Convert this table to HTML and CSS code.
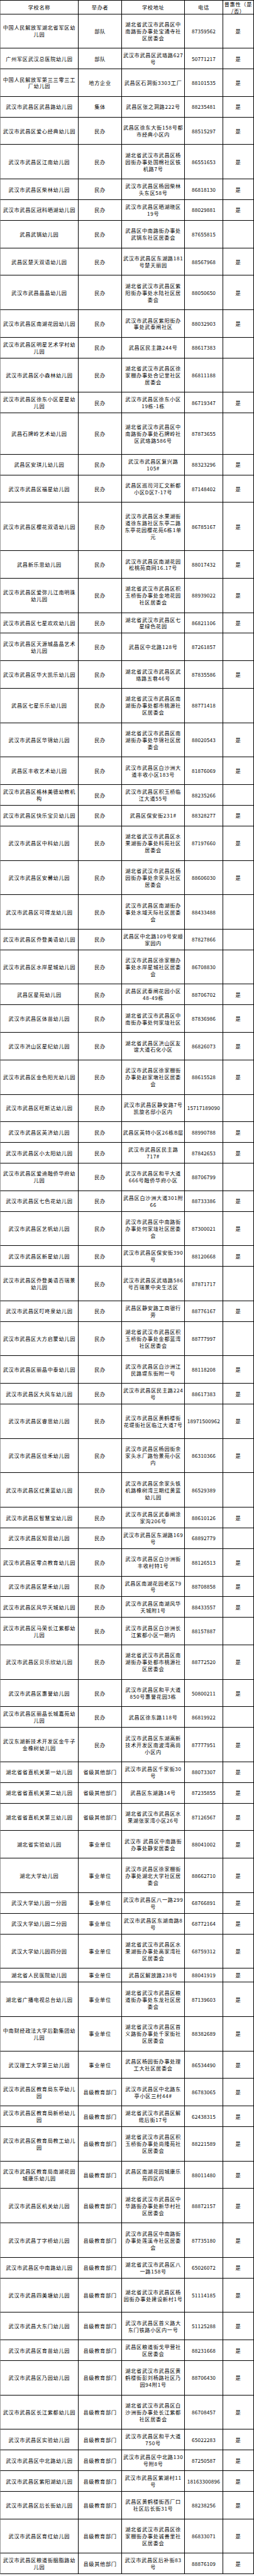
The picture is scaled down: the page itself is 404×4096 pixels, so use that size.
FILE: index.html
```html
<!DOCTYPE html>
<html lang="zh-CN">
<head>
<meta charset="utf-8">
<title>武昌区幼儿园名单</title>
<link rel="stylesheet" href="styles.css">
</head>
<body>
<div class="sheet">
<div class="row head"><div>学校名称</div><div>举办者</div><div>学校地址</div><div>电话</div><div>普惠性（是<br>/否）</div></div>
<div class="row u5"><div>中国人民解放军湖北省军区幼<br>儿园</div><div>部队</div><div>湖北省武汉市武昌区中<br>南路街办事处宝通寺社<br>区居委会</div><div class="tel">87359562</div><div>是</div></div>
<div class="row u3"><div>广州军区武汉总医院幼儿园</div><div>部队</div><div>武汉市武昌区武珞路627<br>号</div><div class="tel">50771217</div><div>是</div></div>
<div class="row u4"><div>中国人民解放军第三三零三工<br>厂幼儿园</div><div>地方企业</div><div>武昌区石洞街3303工厂</div><div class="tel">88101535</div><div>是</div></div>
<div class="row u3"><div>武汉市武昌区武昌路幼儿园</div><div>集体</div><div>武昌区张之洞路222号</div><div class="tel">88235481</div><div>是</div></div>
<div class="row u4"><div>武汉市武昌区爱心经典幼儿园</div><div>民办</div><div>武昌区徐东大街158号都<br>市经典小区内</div><div class="tel">88515297</div><div>是</div></div>
<div class="row u5"><div>武汉市武昌区江南幼儿园</div><div>民办</div><div>湖北省武汉市武昌区杨<br>园街办事处国棉社区铁<br>机路7号</div><div class="tel">86551653</div><div>是</div></div>
<div class="row u3"><div>武汉市武昌区柴林幼儿园</div><div>民办</div><div>武汉市武昌区杨园柴林<br>头东区58号</div><div class="tel">86818130</div><div>是</div></div>
<div class="row u3"><div>武汉市武昌区冠科晒湖幼儿园</div><div>民办</div><div>武汉市武昌区晒湖晓区<br>19号</div><div class="tel">88029881</div><div>是</div></div>
<div class="row u4"><div>武昌武锅幼儿园</div><div>民办</div><div>武昌区中南路街办事处<br>武锅东社区居委会</div><div class="tel">87655815</div><div></div></div>
<div class="row u4"><div>武昌区楚天双语幼儿园</div><div>民办</div><div>武汉市武昌区东湖路181<br>号楚天丽园</div><div class="tel">88567968</div><div>是</div></div>
<div class="row u5"><div>武汉市武昌晶晶幼儿园</div><div>民办</div><div>湖北省武汉市武昌区紫<br>阳街办事处水陆社区居<br>委会</div><div class="tel">88050650</div><div>是</div></div>
<div class="row u4"><div>武汉市武昌区南湖花园幼儿园</div><div>民办</div><div>武汉市武昌区紫阳街办<br>事处武泰闸社区</div><div class="tel">88032903</div><div>是</div></div>
<div class="row u3"><div>武汉市武昌区明星艺术学村幼<br>儿园</div><div>民办</div><div>武昌区民主路244号</div><div class="tel">88617383</div><div></div></div>
<div class="row u5"><div>武汉市武昌区小森林幼儿园</div><div>民办</div><div>湖北省武汉市武昌区徐<br>家棚办事处合记里社区<br>居委会</div><div class="tel">86811188</div><div></div></div>
<div class="row u3"><div>武汉市武昌区徐东小区星星幼<br>儿园</div><div>民办</div><div>武汉市武昌区徐东小区<br>19栋-1栋</div><div class="tel">86719347</div><div>是</div></div>
<div class="row u6"><div>武昌石牌岭艺术幼儿园</div><div>民办</div><div>湖北省武汉市武昌区中<br>南路街办事处石牌岭社<br>区武珞路586号</div><div class="tel">87873655</div><div></div></div>
<div class="row u3"><div>武昌区安琪儿幼儿园</div><div>民办</div><div>武汉市武昌区复兴路<br>105#</div><div class="tel">88323296</div><div>是</div></div>
<div class="row u4"><div>武汉市武昌区福星幼儿园</div><div>民办</div><div>武昌区巡司河汇文新都<br>小区D区7-17号</div><div class="tel">87148402</div><div>是</div></div>
<div class="row u7"><div>武汉市武昌区樱花双语幼儿园</div><div>民办</div><div>武汉市武昌区水果湖街<br>道徐东路社区东亭二路<br>东亭花园樱花苑6栋1单<br>元</div><div class="tel">86785167</div><div>是</div></div>
<div class="row u4"><div>武昌新乐思幼儿园</div><div>民办</div><div>武汉市武昌区南湖花园<br>松桃苑商网16.17号</div><div class="tel">88017432</div><div>是</div></div>
<div class="row u5"><div>武汉市武昌区爱弥儿江南明珠<br>幼儿园</div><div>民办</div><div>湖北省武汉市武昌区积<br>玉桥街办事处金地花园<br>社区居委会</div><div class="tel">88939022</div><div>是</div></div>
<div class="row u3"><div>武汉市武昌区七星欢欢幼儿园</div><div>民办</div><div>湖北省武汉市武昌区七<br>星绿色花园</div><div class="tel">86821106</div><div>是</div></div>
<div class="row u4"><div>武汉市武昌区天源城晶晶艺术<br>幼儿园</div><div>民办</div><div>武昌区中北路128号</div><div class="tel">87261857</div><div></div></div>
<div class="row u4"><div>武汉市武昌区华大凯乐幼儿园</div><div>民办</div><div>湖北省武汉市武昌区武<br>珞路五巷46号</div><div class="tel">87835586</div><div>是</div></div>
<div class="row u5"><div>武昌区七星乐乐幼儿园</div><div>民办</div><div>湖北省武汉市武昌区南<br>湖街办事处都市桃源社<br>区居委会</div><div class="tel">88771418</div><div></div></div>
<div class="row u5"><div>武汉市武昌区华锦幼儿园</div><div>民办</div><div>湖北省武汉市武昌区南<br>湖街办事处华锦社区居<br>委会</div><div class="tel">88020543</div><div>是</div></div>
<div class="row u4"><div>武昌区丰收艺术幼儿园</div><div>民办</div><div>武汉市武昌区白沙洲大<br>道丰收小区183号</div><div class="tel">81876069</div><div>是</div></div>
<div class="row u3"><div>武汉市武昌区格林美德幼教机<br>构</div><div>民办</div><div>武汉市武昌区积玉桥临<br>江大道55号</div><div class="tel">88235266</div><div></div></div>
<div class="row u3"><div>武汉市武昌区快乐宝贝幼儿园</div><div>民办</div><div>武昌区保安街231#</div><div class="tel">88328277</div><div>是</div></div>
<div class="row u5"><div>武汉市武昌区中科幼儿园</div><div>民办</div><div>湖北省武汉市武昌区水<br>果湖街办事处科苑社区<br>居委会</div><div class="tel">87197660</div><div>是</div></div>
<div class="row u5"><div>武汉市武昌区安馨幼儿园</div><div>民办</div><div>湖北省武汉市武昌区杨<br>园街办事处余家头社区<br>居委会</div><div class="tel">88606030</div><div>是</div></div>
<div class="row u5"><div>武汉市武昌区可得龙幼儿园</div><div>民办</div><div>武汉市武昌区南湖街办<br>事处水域天际社区居委<br>会</div><div class="tel">88433488</div><div></div></div>
<div class="row u3"><div>武汉市武昌区乔登美语幼儿园</div><div>民办</div><div>武昌区中北路109号安顺<br>家园内</div><div class="tel">87827866</div><div></div></div>
<div class="row u5"><div>武汉市武昌区水岸星城幼儿园</div><div>民办</div><div>武汉市武昌区徐家棚办<br>事处水岸星城社区居委<br>会</div><div class="tel">86708830</div><div></div></div>
<div class="row u3"><div>武昌区星苑幼儿园</div><div>民办</div><div>武昌区武泰闸花园小区<br>48-49栋</div><div class="tel">88706702</div><div>是</div></div>
<div class="row u4"><div>武汉市武昌区体苗幼儿园</div><div>民办</div><div>湖北省武汉市武昌区中<br>南街办事处何家垅社区</div><div class="tel">87836986</div><div>是</div></div>
<div class="row u4"><div>武汉市洪山区星纪幼儿园</div><div>民办</div><div>湖北省武昌区洪山区友<br>谊大道石化小区</div><div class="tel">86826073</div><div>是</div></div>
<div class="row u5"><div>武汉市武昌区金色阳光幼儿园</div><div>民办</div><div>武汉市武昌区徐家棚街<br>办事处赵家墩社区居委<br>会</div><div class="tel">88615528</div><div>是</div></div>
<div class="row u4"><div>武汉市武昌区旺斯达幼儿园</div><div>民办</div><div>武汉市武昌区静安路7号<br>凯旋名邸小区内</div><div class="tel">15717189090</div><div></div></div>
<div class="row u3"><div>武汉市武昌区英济幼儿园</div><div>民办</div><div>武昌区英特小区26栋B层</div><div class="tel">88990788</div><div>是</div></div>
<div class="row u3"><div>武汉市武昌区小太阳幼儿园</div><div>民办</div><div>武汉市武昌区民主路<br>717#</div><div class="tel">87842653</div><div>是</div></div>
<div class="row u4"><div>武汉市武昌区爱迪融侨华府幼<br>儿园</div><div>民办</div><div>武汉市武昌区和平大道<br>666号融侨华府小区</div><div class="tel">88706799</div><div></div></div>
<div class="row u3"><div>武汉市武昌区七色花幼儿园</div><div>民办</div><div>武昌区白沙洲大道301附<br>66</div><div class="tel">88733386</div><div>是</div></div>
<div class="row u5"><div>武汉市武昌区艺帆幼儿园</div><div>民办</div><div>武汉市武昌区中南路街<br>办事处何家垅社区居委<br>会</div><div class="tel">87300021</div><div>是</div></div>
<div class="row u3"><div>武汉市武昌区新星幼儿园</div><div>民办</div><div>武汉市武昌区保安街390<br>号</div><div class="tel">88120668</div><div>是</div></div>
<div class="row u5"><div>武汉市武昌区乔登美语百瑞景<br>幼儿园</div><div>民办</div><div>武汉市武昌区武珞路586<br>号百瑞景中央生活区</div><div class="tel">87871717</div><div></div></div>
<div class="row u3"><div>武汉市武昌区叮咚泉幼儿园</div><div>民办</div><div>武昌区静安路工商银行<br>旁</div><div class="tel">88776167</div><div>是</div></div>
<div class="row u5"><div>武汉市武昌区大方启蒙幼儿园</div><div>民办</div><div>湖北省武汉市武昌区积<br>玉桥街办事处金都蓝湾<br>社区居委会</div><div class="tel">88777997</div><div></div></div>
<div class="row u4"><div>武汉市武昌区丽晶中泰幼儿园</div><div>民办</div><div>武汉市武昌区白沙洲江<br>民路堤东街附一号</div><div class="tel">88118208</div><div>是</div></div>
<div class="row u3"><div>武汉市武昌区大风车幼儿园</div><div>民办</div><div>武汉市武昌区民主路224<br>号</div><div class="tel">88617383</div><div>是</div></div>
<div class="row u5"><div>武汉市武昌区睿思幼儿园</div><div>民办</div><div>武汉市武昌区黄鹤楼街<br>花堤街社区临江大道7号</div><div class="tel">18971500962</div><div>是</div></div>
<div class="row u5"><div>武汉市武昌区佳禾幼儿园</div><div>民办</div><div>武汉市武昌区杨园街余<br>家头水厂路怡景苑小区<br>内</div><div class="tel">86310366</div><div>是</div></div>
<div class="row u5"><div>武汉市武昌区红黄蓝幼儿园</div><div>民办</div><div>武汉市武昌区余家头铁<br>机路橡树湾三期红黄蓝<br>幼儿园</div><div class="tel">86529389</div><div></div></div>
<div class="row u3"><div>武汉市武昌区智慧宝幼儿园</div><div>民办</div><div>武汉市武昌区武泰闸涂<br>家沟206号</div><div class="tel">88610126</div><div>是</div></div>
<div class="row u3"><div>武汉市武昌区知音幼儿园</div><div>民办</div><div>武汉市武昌区东湖路169<br>号</div><div class="tel">68892779</div><div></div></div>
<div class="row u4"><div>武汉市武昌区零点教育幼儿园</div><div>民办</div><div>武汉市武昌区白沙洲街<br>丰收村特1号</div><div class="tel">88126513</div><div>是</div></div>
<div class="row u3"><div>武汉市武昌区楚禾幼儿园</div><div>民办</div><div>武昌区南湖花园老区79<br>号</div><div class="tel">88708858</div><div>是</div></div>
<div class="row u3"><div>武汉市武昌区风华天城幼儿园</div><div>民办</div><div>武汉市武昌区南湖风华<br>天城附1号</div><div class="tel">88433557</div><div>是</div></div>
<div class="row u4"><div>武汉市武昌区马荣长江紫都幼<br>儿园</div><div>民办</div><div>武汉市武昌区白沙洲长<br>江紫都小区一期内</div><div class="tel">88157887</div><div></div></div>
<div class="row u5"><div>武汉市武昌区贝乐欣幼儿园</div><div>民办</div><div>湖北省武汉市武昌区南<br>湖街办事处都市桃源社<br>区居委会</div><div class="tel">88772520</div><div>是</div></div>
<div class="row u4"><div>武汉市武昌区惠誉幼儿园</div><div>民办</div><div>武汉市武昌区和平大道<br>850号惠誉花园3栋</div><div class="tel">50800211</div><div>是</div></div>
<div class="row u3"><div>武汉市武昌区丽晶长城嘉苑幼<br>儿园</div><div>民办</div><div>武昌区徐东路118号</div><div class="tel">86819922</div><div></div></div>
<div class="row u5"><div>武汉东湖新技术开发区金牛子<br>金橡树幼儿园</div><div>民办</div><div>武汉市武昌区东湖高新<br>技术开发区南波湾高尚<br>小区内</div><div class="tel">87777951</div><div>是</div></div>
<div class="row u3"><div>湖北省省直机关第一幼儿园</div><div>省级其他部门</div><div>武汉市武昌区千家街30<br>号</div><div class="tel">88073307</div><div>是</div></div>
<div class="row u3"><div>湖北省省直机关第二幼儿园</div><div>省级其他部门</div><div>武昌区东湖路14号</div><div class="tel">87235855</div><div>是</div></div>
<div class="row u4"><div>湖北省省直机关第三幼儿园</div><div>省级其他部门</div><div>湖北省武汉市武昌区水<br>果湖张家湾小区26号</div><div class="tel">87126567</div><div>是</div></div>
<div class="row u4"><div>湖北省实验幼儿园</div><div>事业单位</div><div>武汉市&nbsp;武昌区中南路街<br>办事处静安居委会</div><div class="tel">88041002</div><div>是</div></div>
<div class="row u5"><div>湖北大学幼儿园</div><div>事业单位</div><div>武汉市武昌区徐家棚街<br>办事处湖北大学社区居<br>委会</div><div class="tel">88662710</div><div>是</div></div>
<div class="row u3"><div>武汉大学幼儿园一分园</div><div>事业单位</div><div>武汉市武昌区八一路299<br>号</div><div class="tel">68766891</div><div>是</div></div>
<div class="row u3"><div>武汉大学幼儿园二分园</div><div>事业单位</div><div>武汉市武昌区东湖南路8<br>号</div><div class="tel">68772164</div><div>是</div></div>
<div class="row u5"><div>武汉大学幼儿园四分园</div><div>事业单位</div><div>湖北省武汉市武昌区水<br>果湖街办事处高家湾社<br>区居委会</div><div class="tel">68759312</div><div>是</div></div>
<div class="row u2"><div>湖北省人民医院幼儿园</div><div>事业单位</div><div>武昌区解放路238号</div><div class="tel">88041919</div><div>是</div></div>
<div class="row u5"><div>湖北省广播电视总台幼儿园</div><div>事业单位</div><div>湖北省武汉市武昌区粮<br>道街办事处东龙社区居<br>委会</div><div class="tel">87139603</div><div>是</div></div>
<div class="row u5"><div>中南财经政法大学后勤集团幼<br>儿园</div><div>事业单位</div><div>湖北省武汉市武昌区首<br>义路街办事处千家街社<br>区居委会</div><div class="tel">88382689</div><div>是</div></div>
<div class="row u4"><div>武汉理工大学第三幼儿园</div><div>事业单位</div><div>武昌区杨园街办事处理<br>工大社区居委会</div><div class="tel">86534490</div><div>是</div></div>
<div class="row u4"><div>武汉市武昌区教育局东亭幼儿<br>园</div><div>县级教育部门</div><div>武汉市武昌区中北路东<br>亭小区三村44#</div><div class="tel">86783065</div><div>是</div></div>
<div class="row u3"><div>武汉市武昌区教育局新桥幼儿<br>园</div><div>县级教育部门</div><div>湖北省武汉市武昌区解<br>缆后街17号</div><div class="tel">62438315</div><div>是</div></div>
<div class="row u5"><div>武汉市武昌区教育局教工幼儿<br>园</div><div>县级教育部门</div><div>湖北省武汉市武昌区积<br>玉桥街办事处尚隆苑社<br>区居委会</div><div class="tel">88221589</div><div>是</div></div>
<div class="row u4"><div>武汉市武昌区教育局南湖花园<br>城康乐幼儿园</div><div>县级教育部门</div><div>武昌区南湖花园城康乐<br>苑四区内</div><div class="tel">88011480</div><div>是</div></div>
<div class="row u5"><div>武汉市武昌区机关幼儿园</div><div>县级教育部门</div><div>湖北省武汉市武昌区中<br>华路街办事处新华村社<br>区居委会</div><div class="tel">88872157</div><div>是</div></div>
<div class="row u5"><div>武汉市武昌丁字桥幼儿园</div><div>县级教育部门</div><div>武汉市武昌区中南路街<br>办事处莲溪寺社区居委<br>会</div><div class="tel">87735180</div><div>是</div></div>
<div class="row u3"><div>武汉市武昌区中南路幼儿园</div><div>县级教育部门</div><div>湖北省武汉市武昌区八<br>一路158号</div><div class="tel">65026072</div><div>是</div></div>
<div class="row u5"><div>武汉市武昌四美塘幼儿园</div><div>县级教育部门</div><div>湖北省武汉市武昌区杨<br>园街办事处建设新村1号</div><div class="tel">51114185</div><div>是</div></div>
<div class="row u4"><div>武汉市武昌大东门幼儿园</div><div>县级教育部门</div><div>武汉市武昌区首义路大<br>东门铁路小区内一号</div><div class="tel">51125288</div><div>是</div></div>
<div class="row u3"><div>武汉市武昌区育苗幼儿园</div><div>县级教育部门</div><div>武昌区粮道街戈甲营社<br>区居委会</div><div class="tel">88231668</div><div>是</div></div>
<div class="row u5"><div>武汉市武昌区乃园幼儿园</div><div>县级教育部门</div><div>湖北省武汉市武昌区黄<br>鹤楼街彭刘杨路社区乃<br>园94附1号</div><div class="tel">88706430</div><div>是</div></div>
<div class="row u5"><div>武汉市武昌区长江紫都幼儿园</div><div>县级教育部门</div><div>湖北省武汉市武昌区白<br>沙洲街办事处长江紫都<br>社区居委会</div><div class="tel">86708457</div><div>是</div></div>
<div class="row u3"><div>武汉市武昌区实验幼儿园</div><div>县级教育部门</div><div>武汉市武昌区和平大道<br>750号</div><div class="tel">65022283</div><div>是</div></div>
<div class="row u3"><div>武汉市武昌区中北路幼儿园</div><div>县级教育部门</div><div>武汉市武昌区中北路130<br>号附8号</div><div class="tel">87250587</div><div>是</div></div>
<div class="row u3"><div>武汉市武昌区紫阳湖幼儿园</div><div>县级教育部门</div><div>武汉市武昌区紫湖村11<br>号</div><div class="tel">18163300896</div><div>是</div></div>
<div class="row u4"><div>武汉市武昌区后长街幼儿园</div><div>县级教育部门</div><div>武昌区黄鹤楼街西厂口<br>社区后长街31号</div><div class="tel">88238256</div><div>是</div></div>
<div class="row u5"><div>武汉市武昌区育红幼儿园</div><div>县级教育部门</div><div>湖北省武汉市武昌区徐<br>家棚街办事处诚善里社<br>区居委会</div><div class="tel">86833071</div><div>是</div></div>
<div class="row u3"><div>武汉市武昌区粮道街胭脂路幼<br>儿园</div><div>县级其他部门</div><div>武汉市武昌区后补街83<br>号</div><div class="tel">88876109</div><div>是</div></div>
</div>
</body>
</html>
```

FILE: styles.css
```css
html, body {
  margin: 0;
  padding: 0;
  background: #fff;
}

body {
  font-family: "Noto Sans CJK SC", "Noto Sans", sans-serif;
  color: #000;
}

.sheet {
  width: 404px;
  border-top: 1px solid #000;
}

.row {
  display: grid;
  grid-template-columns: 123.8px 69.6px 99.5px 61.1px 48.9px;
  box-sizing: border-box;
  border-left: 1px solid #9a9a9a;
  border-bottom: 1px solid #000;
}

.row > div {
  display: flex;
  align-items: center;
  justify-content: center;
  text-align: center;
  white-space: nowrap;
  border-right: 1px solid #000;
  font-size: 8.2px;
  line-height: 10.944px;
  letter-spacing: 0.684px;
}

.row > .tel {
  letter-spacing: 0.2px;
}

.head { height: 21.57px; }
.u2 { height: 21.888px; }
.u3 { height: 32.832px; }
.u4 { height: 43.776px; }
.u5 { height: 54.72px; }
.u6 { height: 65.664px; }
.u7 { height: 76.608px; }
```
